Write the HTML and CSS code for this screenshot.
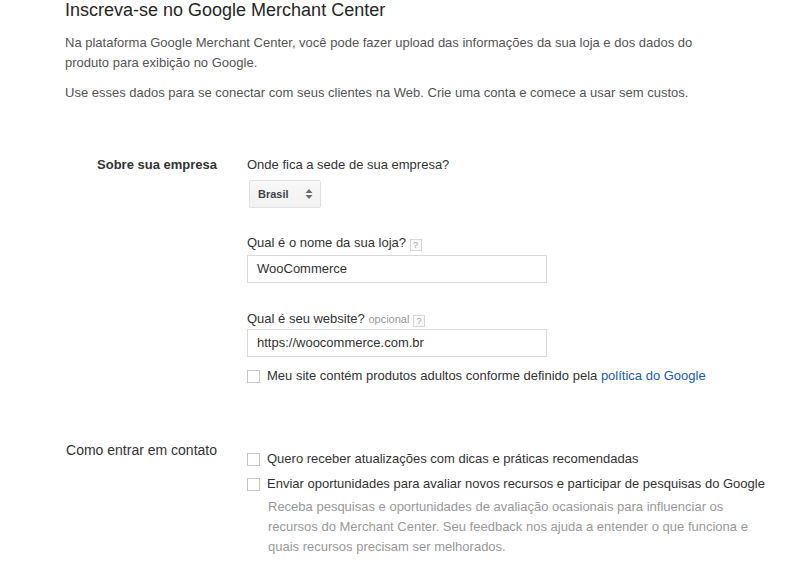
FILE: index.html
```html
<!DOCTYPE html>
<html lang="pt-BR">
<head>
<meta charset="utf-8">
<link rel="stylesheet" href="styles.css">
</head>
<body>
<div class="page">
  <h1 class="title">Inscreva-se no Google Merchant Center</h1>
  <div class="intro">
    <p class="intro-p first">Na plataforma Google Merchant Center, você pode fazer upload das informações da sua loja e dos dados do produto para exibição no Google.</p>
    <p class="intro-p second">Use esses dados para se conectar com seus clientes na Web. Crie uma conta e comece a usar sem custos.</p>
  </div>

  <div class="section s-company">
    <div class="sec-label bold">Sobre sua empresa</div>
    <div class="sec-body">
      <div class="field-label">Onde fica a sede de sua empresa?</div>
      <div class="select">
        <span class="select-text">Brasil</span>
        <svg class="select-arrows" width="8" height="12" viewBox="0 0 8 12"><path d="M4 1 L7.5 5 L0.5 5 Z M4 11 L7.5 7 L0.5 7 Z" fill="#6b6b6b"/></svg>
      </div>

      <div class="field-label l-store">Qual é o nome da sua loja? <span class="help">?</span></div>
      <div class="input">WooCommerce</div>

      <div class="field-label l-site">Qual é seu website? <span class="optional">opcional</span> <span class="help">?</span></div>
      <div class="input i-site">https://woocommerce.com.br</div>

      <div class="check-row r-adult">
        <span class="checkbox"></span>
        <span class="check-text">Meu site contém produtos adultos conforme definido pela <a class="link" href="#">política do Google</a></span>
      </div>
    </div>
  </div>

  <div class="section s-contact">
    <div class="sec-label large">Como entrar em contato</div>
    <div class="sec-body contact-body">
      <div class="check-row">
        <span class="checkbox"></span>
        <span class="check-text">Quero receber atualizações com dicas e práticas recomendadas</span>
      </div>
      <div class="check-row r-second">
        <span class="checkbox"></span>
        <span class="check-text">Enviar oportunidades para avaliar novos recursos e participar de pesquisas do Google</span>
      </div>
      <p class="desc">Receba pesquisas e oportunidades de avaliação ocasionais para influenciar os recursos do Merchant Center. Seu feedback nos ajuda a entender o que funciona e quais recursos precisam ser melhorados.</p>
    </div>
  </div>
</div>
</body>
</html>
```

FILE: styles.css
```css
html, body {
  margin: 0;
  padding: 0;
  background: #ffffff;
}

body {
  font-family: "Liberation Sans", Arial, sans-serif;
  color: #333333;
  font-size: 13px;
  line-height: 20px;
}

.page {
  padding-left: 65px;
  width: 700px;
}

.title {
  margin: 0;
  font-size: 18px;
  font-weight: normal;
  line-height: 20px;
  color: #262626;
}

.intro {
  width: 660px;
}

.intro-p {
  margin: 0;
  color: #555555;
}

.intro-p.first {
  margin-top: 13px;
}

.intro-p.second {
  margin-top: 10px;
}

.section {
  display: flex;
  gap: 30px;
}

.s-company {
  margin-top: 52px;
}

.s-contact {
  margin-top: 54px;
}

.sec-label {
  width: 152px;
  flex: none;
  text-align: right;
  color: #333333;
  white-space: nowrap;
}

.sec-label.bold {
  font-weight: bold;
}

.sec-label.large {
  font-size: 14px;
}

.sec-body {
  display: flex;
  flex-direction: column;
  align-items: flex-start;
}

.field-label {
  color: #333333;
  white-space: nowrap;
}

.select {
  margin-top: 5px;
  margin-left: 2px;
  width: 72px;
  height: 28px;
  box-sizing: border-box;
  border: 1px solid #e0e0e0;
  border-radius: 2px;
  background: linear-gradient(#f8f8f8, #f1f1f1);
  display: flex;
  align-items: center;
  justify-content: space-between;
  padding: 0 7px 0 8px;
}

.select-text {
  font-size: 11px;
  font-weight: bold;
  color: #444444;
}

.select-arrows {
  display: block;
}

.l-store {
  margin-top: 25px;
}

.l-site {
  margin-top: 26px;
}

.help {
  display: inline-block;
  vertical-align: -1px;
  width: 12px;
  height: 12px;
  box-sizing: border-box;
  border: 1px solid #d6d6d6;
  background: #fafafa;
  color: #a0a0a0;
  font-size: 9px;
  line-height: 10px;
  text-align: center;
}

.optional {
  font-size: 11px;
  color: #999999;
}

.input {
  margin-top: 2px;
  width: 300px;
  height: 28px;
  box-sizing: border-box;
  border: 1px solid #d9d9d9;
  padding: 0 9px;
  line-height: 26px;
  color: #333333;
  background: #ffffff;
}

.input.i-site {
  margin-top: 0;
}

.check-row {
  display: flex;
  align-items: center;
  gap: 7px;
}

.r-adult {
  margin-top: 9px;
}

.checkbox {
  width: 13px;
  height: 13px;
  box-sizing: border-box;
  border: 1px solid #c6c6c6;
  background: #ffffff;
  flex: none;
}

.check-text {
  color: #333333;
  white-space: nowrap;
}

.link {
  color: #1a5bb8;
  text-decoration: none;
}

.contact-body {
  padding-top: 9px;
}

.r-second {
  margin-top: 5px;
}

.desc {
  margin: 3px 0 0 21px;
  width: 490px;
  color: #999999;
}
```
